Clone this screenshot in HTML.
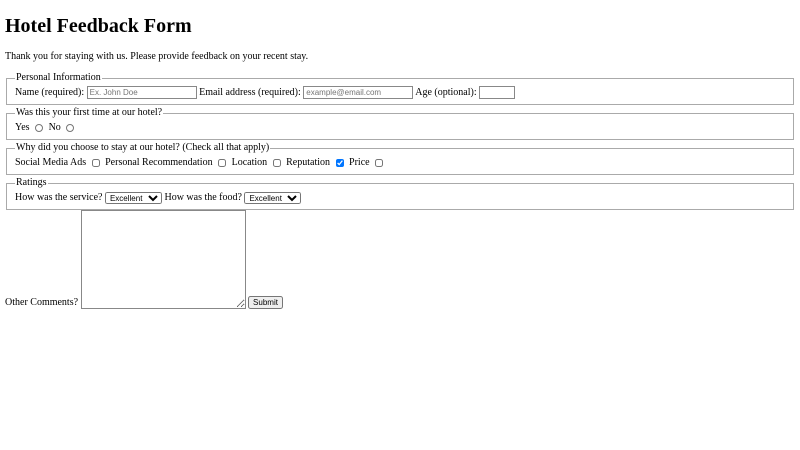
<!DOCTYPE html>
<html><head><meta charset="utf-8"><style>
body{margin:5px;font-family:"Liberation Serif",serif;font-size:10px;line-height:12px;background:#fff;color:#000}
h1{font-size:20px;line-height:23px;margin:15px 0 13px 0;font-weight:bold}
p{margin:0 0 9px 0}
fieldset{margin:0 1px 2px 1px;border:1px solid #aaa;padding:2px 8px 5px 8px;line-height:13px}
legend{padding:0 1px;line-height:12px}
input[type=text],input[type=email],input[type=number]{font-family:"Liberation Sans",sans-serif;font-size:8px;width:104px;height:9px;padding:1px 2px;border:1px solid #888;vertical-align:middle;margin:0}
input[type=radio],input[type=checkbox]{width:8px;height:8px;margin:0 3px;vertical-align:middle}
select{font-family:"Liberation Sans",sans-serif;font-size:8px;height:12px;width:57px;vertical-align:middle;padding:0}
textarea{width:159px;height:93px;vertical-align:bottom;border:1px solid #888;margin:0}
button{font-family:"Liberation Sans",sans-serif;font-size:8px;height:13px;padding:0 3px;vertical-align:bottom;line-height:10px}
</style></head><body>
<h1>Hotel Feedback Form</h1>
<p>Thank you for staying with us. Please provide feedback on your recent stay.</p>
<fieldset><legend>Personal Information</legend>
Name (required): <input type="text" placeholder="Ex. John Doe"> Email address (required): <input type="email" placeholder="example@email.com"> Age (optional): <input type="number" style="width:30px">
</fieldset>
<fieldset><legend>Was this your first time at our hotel?</legend>
Yes <input type="radio" name="a"> No <input type="radio" name="a">
</fieldset>
<fieldset><legend>Why did you choose to stay at our hotel? (Check all that apply)</legend>
Social Media Ads <input type="checkbox"> Personal Recommendation <input type="checkbox"> Location <input type="checkbox"> Reputation <input type="checkbox" checked> Price <input type="checkbox">
</fieldset>
<fieldset style="margin-bottom:0"><legend>Ratings</legend>
How was the service? <select><option>Excellent</option></select> How was the food? <select><option>Excellent</option></select>
</fieldset>
<div>Other Comments? <textarea></textarea> <button>Submit</button></div>
</body></html>
